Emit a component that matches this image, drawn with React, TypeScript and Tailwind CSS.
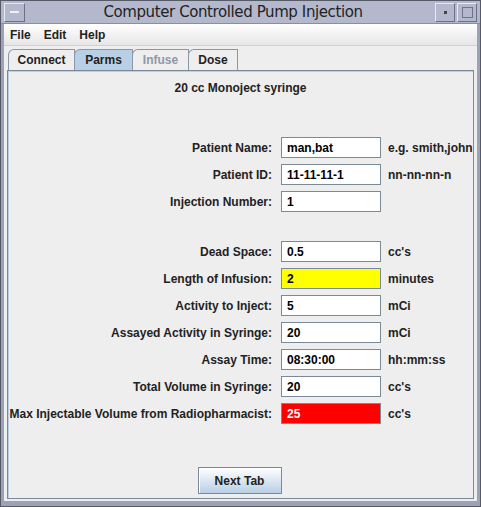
// Swing/Metal style "Computer Controlled Pump Injection" window, Parms tab

const rows: { label: string; value: string; unit?: string; tone?: 'yellow' | 'red' }[][] = [
  [
    { label: 'Patient Name:', value: 'man,bat', unit: 'e.g. smith,john' },
    { label: 'Patient ID:', value: '11-11-11-1', unit: 'nn-nn-nn-n' },
    { label: 'Injection Number:', value: '1' },
  ],
  [
    { label: 'Dead Space:', value: '0.5', unit: "cc's" },
    { label: 'Length of Infusion:', value: '2', unit: 'minutes', tone: 'yellow' },
    { label: 'Activity to Inject:', value: '5', unit: 'mCi' },
    { label: 'Assayed Activity in Syringe:', value: '20', unit: 'mCi' },
    { label: 'Assay Time:', value: '08:30:00', unit: 'hh:mm:ss' },
    { label: 'Total Volume in Syringe:', value: '20', unit: "cc's" },
    { label: 'Max Injectable Volume from Radiopharmacist:', value: '25', unit: "cc's", tone: 'red' },
  ],
];

const tabs = [
  { name: 'Connect', w: 'w-[67px]' },
  { name: 'Parms', w: 'w-[59px]' },
  { name: 'Infuse', w: 'w-[57px]' },
  { name: 'Dose', w: 'w-[50px]' },
];

function Field({ value, tone }: { value: string; tone?: 'yellow' | 'red' }) {
  const bg = tone === 'yellow' ? 'bg-[#ffff00] text-black' : tone === 'red' ? 'bg-[#ff0000] text-white' : 'bg-white text-black';
  return (
    <div className={`w-[100px] h-[21px] border border-[#7a8a99] pl-[5px] flex items-center font-bold text-[12px] ${bg}`}>
      {value}
    </div>
  );
}

export default function App() {
  return (
    <div className="w-[481px] h-[507px] bg-[#eeeeee] flex flex-col border border-[#555a66] font-['Liberation_Sans',Arial,sans-serif] text-[#333333] overflow-hidden">
      {/* Title bar */}
      <div className="h-[23px] shrink-0 bg-[#b4b8cc] flex items-center border-b border-[#8a8ea0] px-[3px] gap-[2px]">
        <div className="w-[21px] h-[19px] border border-[#e8eaf2] border-r-[#6d7080] border-b-[#6d7080] flex items-center justify-center">
          <div className="w-[9px] h-[2px] bg-[#f0f0f6]" />
        </div>
        <div className="flex-1 text-center text-[15px] text-[#222222] font-['DejaVu_Sans',sans-serif] tracking-[-0.4px] pl-[6px]">
          Computer Controlled Pump Injection
        </div>
        <div className="w-[20px] h-[19px] border border-[#e8eaf2] border-r-[#6d7080] border-b-[#6d7080] flex items-center justify-center">
          <div className="w-[3px] h-[3px] bg-[#444]" />
        </div>
        <div className="w-[20px] h-[19px] border border-[#e8eaf2] border-r-[#6d7080] border-b-[#6d7080] flex items-center justify-center">
          <div className="w-[11px] h-[11px] border border-[#70738a]" />
        </div>
      </div>

      <div className="flex-1 flex flex-col border-x-[3px] border-b-[5px] border-[#9ea2b6]">
        {/* Menu bar */}
        <div className="h-[22px] shrink-0 bg-gradient-to-b from-[#ffffff] to-[#e6e6e6] border-b border-[#d0d0d0] flex items-center gap-[13px] px-[6px] text-[12px] font-bold text-[#222]">
          <span>File</span>
          <span>Edit</span>
          <span>Help</span>
        </div>

        {/* Tabs */}
        <div className="flex flex-col flex-1 pt-[3px] px-[3px] pb-[2px]">
          <div className="flex h-[21px] pl-[1px]">
            {tabs.map((t) => {
              const sel = t.name === 'Parms';
              const dim = t.name === 'Infuse';
              return (
                <div
                  key={t.name}
                  className={`${t.w} h-[21px] flex items-center justify-center text-[12px] font-bold border border-b-0 border-[#8a97a6] rounded-tl-[6px] -mr-px ${
                    sel ? 'bg-[#b8cfe5]' : 'bg-[#eeeeee]'
                  } ${dim ? 'text-[#8e99a8]' : 'text-[#222]'}`}
                >
                  {t.name}
                </div>
              );
            })}
          </div>
          <div className="flex-1 border border-[#7a8a99] bg-[#eeeeee] flex flex-col shadow-[inset_1px_1px_0_#b8cfe5]">
            <div className="text-center text-[12px] font-bold text-[#222] mt-[8px]">20 cc Monoject syringe</div>

            <div className="flex flex-col mt-[40px]">
              {rows.map((group, gi) => (
                <div key={gi} className={`flex flex-col gap-[6px] ${gi === 1 ? 'mt-[29px]' : ''}`}>
                  {group.map((r) => (
                    <div key={r.label} className="flex items-center h-[21px]">
                      <div className="w-[264px] text-right text-[12px] font-bold text-[#222] whitespace-nowrap">{r.label}</div>
                      <div className="ml-[9px]">
                        <Field value={r.value} tone={r.tone} />
                      </div>
                      <div className="ml-[7px] text-[12px] font-bold text-[#222] whitespace-nowrap">{r.unit}</div>
                    </div>
                  ))}
                </div>
              ))}
            </div>

            <div className="flex-1" />
            <div className="flex justify-center pb-[4px] pr-[2px]">
              <div className="w-[84px] h-[27px] border border-[#7a8a99] bg-gradient-to-b from-[#ffffff] to-[#b8cfe5] flex items-center justify-center text-[12px] font-bold text-[#222] shadow-[inset_1px_1px_0_#ffffff]">
                Next Tab
              </div>
            </div>
          </div>
        </div>
      </div>
    </div>
  );
}
